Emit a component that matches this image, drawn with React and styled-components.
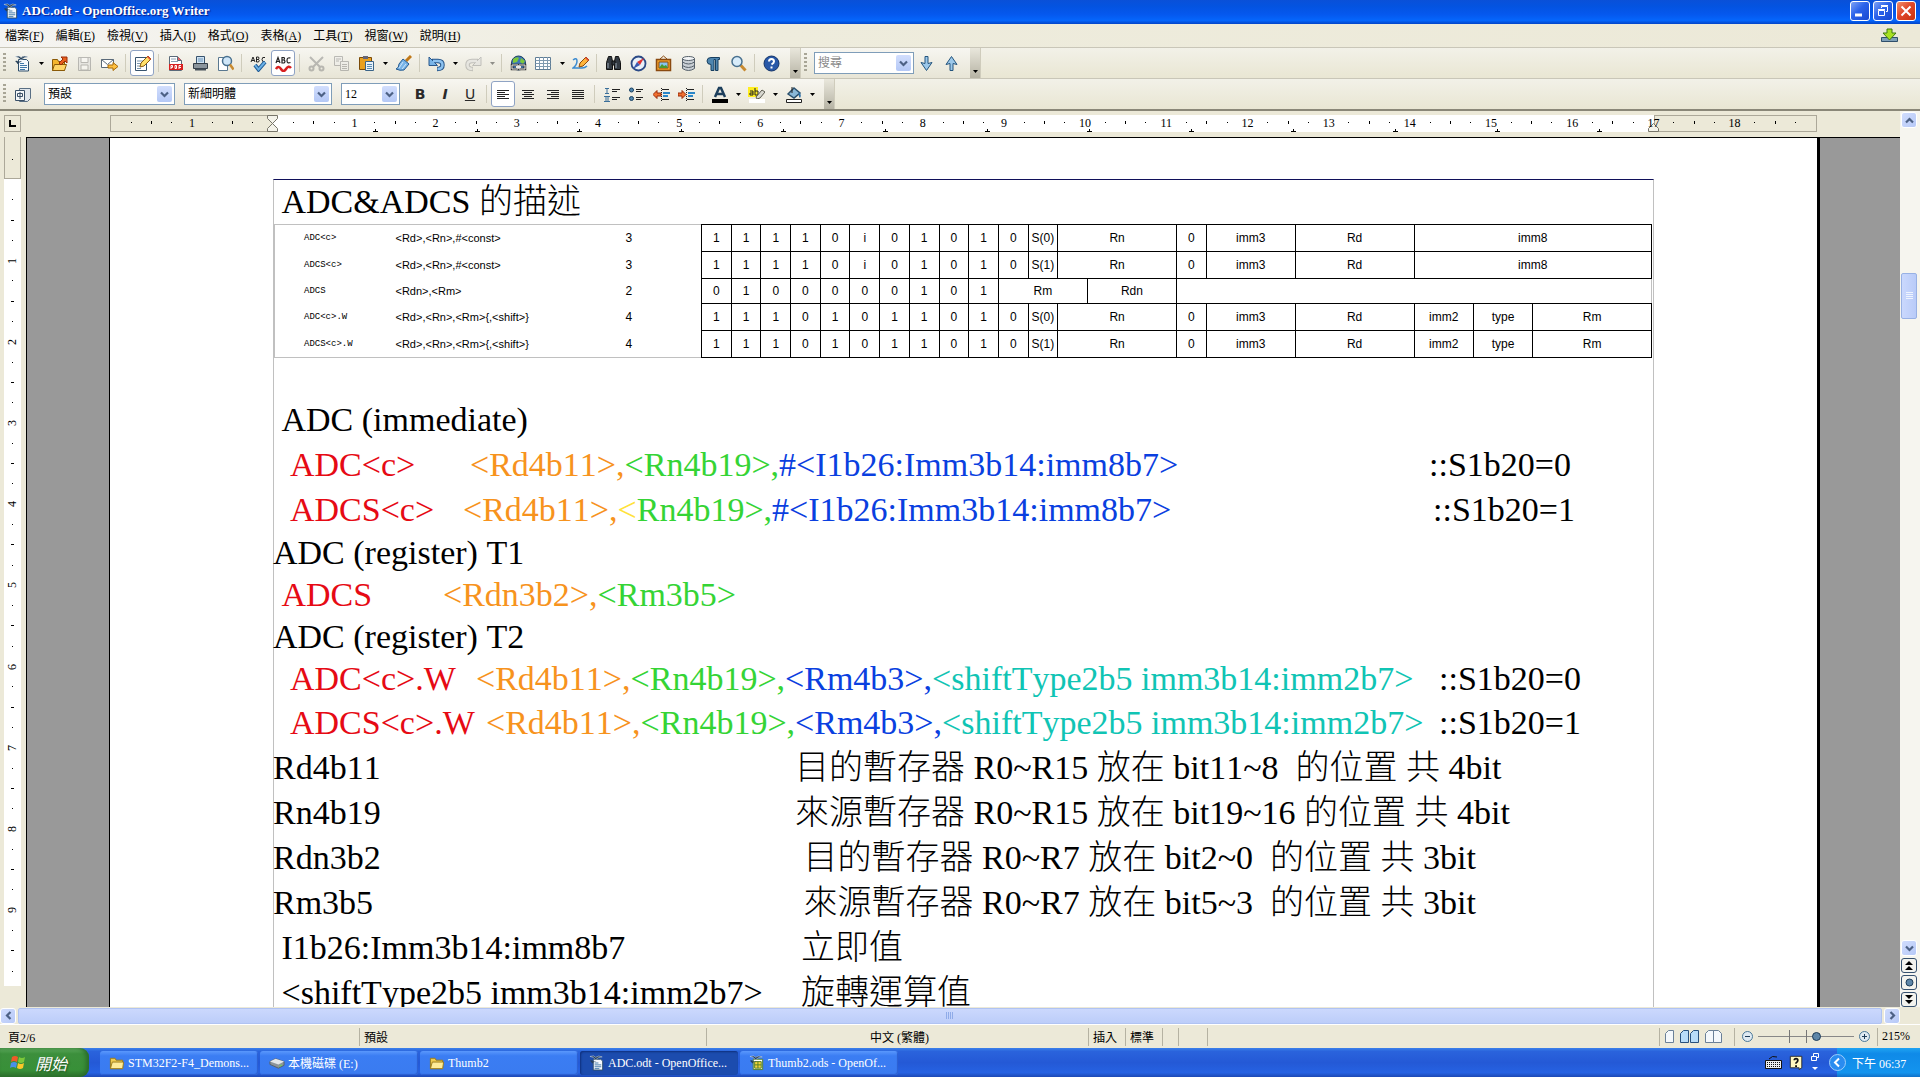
import React from "react";
import styled, { createGlobalStyle, css } from "styled-components";

const UI = `"Liberation Serif", "Noto Sans CJK TC", serif`;

const Global = createGlobalStyle`
  * { box-sizing: border-box; }
  html, body, #root { height: 100%; }
  body { margin: 0; background: #fff; overflow: hidden; font-family: ${UI}; font-size: 12px; color: #000; }
  button, input, select { font: inherit; color: inherit; margin: 0; padding: 0; border: 0; background: none; }
`;

const Window = styled.div`
  display: flex;
  flex-direction: column;
  height: 100vh;
  padding-bottom: 3px;
`;

/* ---------- title bar and menu ---------- */
const TitleBar = styled.header`
  display: flex;
  align-items: center;
  height: 24px;
  padding: 0 4px 2px 3px;
  background: linear-gradient(#0a50d8 0, #0453e0 25%, #0558ee 60%, #0566fc 85%, #0344c8 100%);
  color: #fff;
  flex: none;
`;
const AppTitle = styled.h1`
  flex: 1;
  margin: 0 0 0 3px;
  font-size: 13px;
  line-height: 20px;
  font-weight: bold;
  text-shadow: 1px 1px 1px #0a1883;
`;
const WinButtons = styled.div`
  display: flex;
  gap: 3px;
`;
const WinButton = styled.button`
  display: flex;
  width: 20px;
  height: 20px;
  border: 1px solid #fff;
  border-radius: 3px;
  background: ${(p) => (p.$close ? "linear-gradient(135deg,#f0906c,#e0482a 45%,#c8310f)" : "linear-gradient(135deg,#7da2f5,#2a62ea 45%,#1848d0)")};
`;
const MenuBar = styled.nav`
  display: flex;
  align-items: center;
  gap: 12px;
  height: 23px;
  padding: 0 22px 0 5px;
  background: linear-gradient(90deg, #f5f4f1, #eeecdd 40%, #ece9d8);
  flex: none;
`;
const MenuItem = styled.button`
  line-height: 20px;
  white-space: nowrap;
`;
const Spacer = styled.span`
  flex: 1;
`;
const IconButton = styled.button`
  display: flex;
`;

/* ---------- toolbars ---------- */
const ToolRow = styled.div`
  display: flex;
  align-items: stretch;
  height: 31px;
  background: linear-gradient(#f2f1e8, #e9e6d3);
  border-top: 1px solid #c9c6b8;
  flex: none;
`;
const Tools = styled.div`
  display: flex;
  align-items: center;
  padding-left: 3px;
  background: linear-gradient(#f7f6f1, #e8e5d6);
  border-right: 1px solid #cfccbc;
`;
const Grip = styled.span`
  width: 3px;
  height: 20px;
  margin-right: 4px;
  background: repeating-linear-gradient(#a8a596 0 2px, transparent 2px 4px);
`;
const Tool = styled.button`
  display: flex;
  align-items: center;
  justify-content: center;
  width: 24px;
  height: 26px;
  margin-right: 1px;
  opacity: ${(p) => (p.$off ? 0.45 : 1)};
  ${(p) =>
    p.$on &&
    css`
      background: #fff;
      border: 1px solid #8fa3c4;
      border-radius: 3px;
    `}
`;
const Drop = styled.button`
  width: 12px;
  height: 26px;
  display: flex;
  align-items: center;
  justify-content: center;
  opacity: ${(p) => (p.$off ? 0.4 : 1)};
`;
const Sep = styled.span`
  width: 1px;
  height: 18px;
  margin: 0 4px 0 3px;
  background: #cfccbc;
`;
const Overflow = styled.button`
  align-self: stretch;
  display: flex;
  align-items: flex-end;
  justify-content: center;
  width: 10px;
  padding-bottom: 5px;
  margin-left: 6px;
  background: linear-gradient(#e9e7dc, #b6b3a4);
`;
const Formats = styled.span`
  display: flex;
  align-items: center;
  margin-left: 8px;
`;
const Combo = styled.span`
  display: flex;
  position: relative;
  width: ${(p) => p.$w}px;
  height: 22px;
  margin-left: ${(p) => p.$gap}px;
  border: 1px solid #7f9db9;
  background: #fff;

  select, input {
    width: 100%;
    appearance: none;
    padding-left: 3px;
    outline: 0;
  }
  input::placeholder { color: #8a8a8a; opacity: 1; }
`;
const Chevron = styled.span`
  position: absolute;
  right: 2px;
  top: 2px;
  display: flex;
  align-items: center;
  justify-content: center;
  width: 15px;
  height: 16px;
  border-radius: 2px;
  background: linear-gradient(#d2defd, #b4c8f6);
  pointer-events: none;
`;

/* ---------- workspace ---------- */
const Work = styled.main`
  display: flex;
  flex: 1;
  min-height: 0;
  border-top: 2px solid #8a8778;
  background: #ece9d8;
`;
const WorkLeft = styled.div`
  display: flex;
  flex-direction: column;
  flex: 1;
  min-width: 0;
`;
const RulerRow = styled.div`
  display: flex;
  align-items: flex-start;
  height: 26px;
  padding: 4px 83px 0 4px;
  flex: none;
`;
const TabCorner = styled.button`
  display: flex;
  align-items: center;
  justify-content: center;
  width: 17px;
  height: 17px;
  margin-right: 89px;
  border: 1px solid #aca899;
`;
const Ruler = styled.div`
  position: relative;
  display: flex;
  flex: 1;
  height: 17px;
`;
const RulerMargin = styled.span`
  width: 163px;
  border: 1px solid #aca899;
`;
const RulerBody = styled.span`
  flex: 1;
  background: #fff;
`;
const Slots = styled.div`
  position: absolute;
  inset: 0;
  display: flex;
  padding: 0 11px;
`;
const Slot = styled.span`
  flex: 1 1 0;
  min-width: 0;
  min-height: 0;
  display: flex;
  align-items: center;
  justify-content: center;
  line-height: 14px;
`;
const HSlot = styled(Slot)`
  padding-bottom: 2px;
`;
const Tick = styled.i`
  width: 1px;
  height: ${(p) => (p.$half ? 3 : 1)}px;
  background: #000;
`;
const TabStops = styled.div`
  position: absolute;
  left: 263px;
  right: 215px;
  bottom: 0;
  display: flex;
  justify-content: space-between;
`;
const TabStop = styled.i`
  width: 5px;
  height: 3px;
  border-bottom: 1px solid #000;
  background: linear-gradient(#000, #000) center / 1px 100% no-repeat;
`;
const Indent = styled.svg`
  position: absolute;
  top: 0;
  ${(p) => p.$side}: 157px;
`;
const Body = styled.div`
  display: flex;
  flex: 1;
  min-height: 0;
`;
const VRuler = styled.div`
  position: relative;
  display: flex;
  flex-direction: column;
  width: 17px;
  margin: 0 5px 21px 4px;
`;
const VMargin = styled.span`
  height: 42px;
  border: 1px solid #aca899;
  border-top: 0;
`;
const VSlots = styled(Slots)`
  flex-direction: column;
  padding: 12px 0 5px;
`;
const VNum = styled.span`
  writing-mode: vertical-rl;
  transform: rotate(180deg);
  line-height: 17px;
`;
const VTick = styled.i`
  height: 1px;
  width: ${(p) => (p.$half ? 3 : 1)}px;
  background: #000;
`;
const Desk = styled.div`
  flex: 1;
  display: flex;
  min-width: 0;
  padding: 0 80px 0 82px;
  border-top: 1px solid #000;
  border-left: 1px solid #000;
  background: #999;
  overflow: hidden;
`;
const Page = styled.article`
  flex: 1;
  min-width: 0;
  padding: 41px 163px 0 163px;
  border-left: 1px solid #000;
  border-right: 3px solid #000;
  background: #fff;
`;
const Frame = styled.section`
  min-height: 900px;
  border: 1px solid #c0c0c0;
  border-top-color: #10105a;
  border-bottom: 0;
`;
const Line = styled.p`
  display: flex;
  margin: 0 0 0 -1px;
  height: ${(p) => p.$h}px;
  line-height: ${(p) => p.$h}px;
  font-size: 34px;
  font-weight: 300;
  font-kerning: none;
  white-space: pre;
`;
const Part = styled.span`
  flex: none;
  width: ${(p) => (p.$w ? p.$w + "px" : "auto")};
  color: ${(p) => p.$c || "inherit"};
`;
const Ink = styled.span`
  color: ${(p) => p.$c};
`;

const Codes = styled.table`
  width: calc(100% - 1px);
  margin-bottom: 40px;
  table-layout: fixed;
  border-collapse: collapse;
  border: 1px solid #c0c0c0;
  font-family: "Liberation Sans Narrow", "Liberation Sans", Arial, sans-serif;
  font-size: 12px;
  line-height: 24px;

  td { padding: 0; white-space: nowrap; }
`;
const Column = styled.col`
  width: ${(p) => p.$w}px;
`;
const CodeRow = styled.tr`
  height: ${(p) => p.$h}px;
`;
const Mnemonic = styled.td`
  font-family: "Liberation Mono", monospace;
  font-size: 9px;
  text-indent: 29px;
`;
const Operands = styled.td`
  font-size: 11px;
`;
const Bits = styled.td`
  border: 1px solid #000;
  text-align: center;
`;
const Count = styled.td`
  text-align: left;
`;

/* ---------- scroll bars ---------- */
const VScroll = styled.div`
  display: flex;
  flex-direction: column;
  width: 20px;
  padding: 1px 3px 0 1px;
  background: #f6f5ef;
`;
const ScrollButton = styled.button`
  display: flex;
  align-items: center;
  justify-content: center;
  flex: none;
  width: 16px;
  height: 16px;
  border: 1px solid #fff;
  border-radius: 3px;
  background: linear-gradient(135deg, #d0dcfd, #b7c9f7);
`;
const NavButton = styled(ScrollButton)`
  height: 15px;
  margin-top: 2px;
  border: 1px solid #35506e;
  background: #f3f3ee;
`;
const Gap = styled.span`
  flex: ${(p) => p.$n} 1 0;
`;
const VThumb = styled.span`
  display: flex;
  align-items: center;
  justify-content: center;
  height: 46px;
  border: 1px solid #98b1e4;
  border-radius: 2px;
  background: linear-gradient(90deg, #cad8fd, #b9cbf8);
`;
const HScroll = styled.div`
  display: flex;
  align-items: center;
  height: 17px;
  gap: 2px;
  padding-right: 20px;
  background: #ece9d8;
  flex: none;
`;
const HThumb = styled.span`
  flex: 1;
  display: flex;
  align-items: center;
  justify-content: center;
  height: 16px;
  border: 1px solid #b0c3f2;
  border-radius: 2px;
  background: linear-gradient(#cbd8fd, #bccdf9);
`;

/* ---------- status bar ---------- */
const Status = styled.footer`
  display: flex;
  align-items: center;
  height: 24px;
  background: #ece9d8;
  border-top: 1px solid #fff;
  padding-right: 3px;
  flex: none;
`;
const Cell = styled.span`
  display: flex;
  align-items: center;
  justify-content: ${(p) => (p.$center ? "center" : "flex-start")};
  gap: 2px;
  height: 18px;
  padding-left: ${(p) => (p.$first ? 8 : 4)}px;
  border-left: ${(p) => (p.$first ? "0" : "1px solid #b5b2a2")};
  ${(p) => (p.$w ? `width: ${p.$w}px;` : "flex: 1;")}
  white-space: nowrap;
`;
const Zoom = styled.input`
  appearance: none;
  width: 96px;
  height: 13px;
  background:
    linear-gradient(#777, #777) 31px 0 / 1px 13px no-repeat,
    linear-gradient(#777, #777) 48px 0 / 1px 13px no-repeat,
    linear-gradient(#888, #888) 0 6px / 100% 1px no-repeat;
  &::-webkit-slider-thumb {
    appearance: none;
    width: 9px;
    height: 9px;
    border: 1px solid #1d3c58;
    border-radius: 50%;
    background: #5d86a8;
  }
`;

/* ---------- task bar ---------- */
const TaskBar = styled.div`
  display: flex;
  align-items: stretch;
  height: 29px;
  background: linear-gradient(#3b80ea 0, #2a63dc 12%, #2459d6 50%, #2662e2 85%, #1d48b4);
  color: #fff;
  flex: none;
`;
const Start = styled.button`
  display: flex;
  align-items: center;
  gap: 8px;
  width: 89px;
  padding-left: 10px;
  margin-right: 11px;
  border-radius: 0 9px 9px 0;
  background: linear-gradient(#62b062, #3c8f3c 20%, #389038 75%, #2c702c);
  box-shadow: inset -3px 0 4px #2a6b2a;
  font-size: 16px;
  font-style: italic;
  color: #fff;
  text-shadow: 1px 1px 2px #1c4a1c;
`;
const Task = styled.button`
  display: flex;
  align-items: center;
  gap: 3px;
  width: 158px;
  margin: 3px 2px 2px 0;
  padding-left: 9px;
  border-radius: 3px;
  background: ${(p) => (p.$on ? "#1c4cae" : "linear-gradient(#5a98fc, #3b7df3 20%, #3a7bf0)")};
  box-shadow: ${(p) => (p.$on ? "inset 1px 1px 2px #0e2f7c" : "inset -1px -1px 1px #2c5fd0")};
  color: #fff;
  white-space: nowrap;
`;
const Tray = styled.div`
  display: flex;
  align-items: center;
  gap: 7px;
  padding-right: 16px;
`;
const Clock = styled.div`
  display: flex;
  align-items: center;
  gap: 6px;
  width: 83px;
  background: linear-gradient(#1fa3f2, #0f8ae8 20%, #1394ee 85%, #0f70c8);
`;
const Round = styled.button`
  display: flex;
  margin-left: -8px;
`;

/* ---------- drawings ---------- */
const lines = (rows, y0 = 2) =>
  rows.map(([a, b], i) => <path key={i} d={`M${a} ${y0 + i * 2}.5H${b}`} stroke="#222" />);
const sheet = (
  <g>
    <path d="M4.500 4.500h8l2 2v9.500h-10z" fill="#f4f8fc" stroke="#2f4f6b" />
    <path d="M6 8.500h4M6 10.500h7M6 12.500h7M6 14.500h5" stroke="#3f78a8" />
  </g>
);
const gull = (
  <g>
    <path d="M1 1.500q5-1.500 6 1q3-2.500 7-.500q-4 0-7 3q-2-3-6-3.500z" fill="#284058" stroke="#dfe8f0" strokeWidth=".5" />
    <path d="M1 6q3-1 3 1q2-1 4-.500q-3 .500-4.500 2.500q-1-2-2.500-3z" fill="#284058" />
  </g>
);

const ICONS = {
  writer: <g>{sheet}{gull}</g>,
  calc: (
    <g>
      <path d="M4.500 4.500h10v11h-10z" fill="#fff" stroke="#4f7d22" />
      <path d="M6 7h7v7H6z" fill="#f4d23a" stroke="#4f7d22" />
      <path d="M9.500 7v7M6 10.500h7" stroke="#4f7d22" />
      {gull}
    </g>
  ),
  open: (
    <g stroke="#8a5a08">
      <path d="M1.500 15.500v-11h5l1 2h6v9z" fill="#f5b52c" />
      <path d="M1.500 15.500l2-6h12l-2 6z" fill="#ffd566" />
      <path d="M8 8l4-4-2-2h6v6l-2-2-4 4z" fill="#e8601c" stroke="#9a2a08" />
    </g>
  ),
  save: (
    <g stroke="#777" fill="#ddd">
      <path d="M2.500 2.500h12v13h-12z" />
      <path d="M5 2.500h7v5H5zM5 10h7v5H5z" fill="#fff" />
    </g>
  ),
  mail: (
    <g>
      <path d="M.500 4.500h12v8H.500z" fill="#fff" stroke="#5a6a7a" />
      <path d="M.500 4.500l6 5 6-5" fill="none" stroke="#5a6a7a" />
      <path d="M7 10h5V7.500l5 4-5 4V13H7z" fill="#ffc040" stroke="#a86a08" />
    </g>
  ),
  edit: (
    <g>
      <path d="M1.500 2.500h11v13h-11z" fill="#fff" stroke="#37536e" />
      <path d="M3 6h7M3 8.500h5M3 11h4M3 13.500h4" stroke="#7a96ae" />
      <path d="M6 12l1-4 7-7 3 3-7 7z" fill="#ffe06a" stroke="#8a5a10" />
      <path d="M13 2l1-1 3 3-1 1z" fill="#e84838" />
    </g>
  ),
  pdf: (
    <g>
      <path d="M2.500 1.500h8l4 4v10h-12z" fill="#fff" stroke="#5a6a7a" />
      <path d="M10.500 1.500v4h4" fill="#e86060" stroke="#5a6a7a" />
      <path d="M4 4h5M4 6.500h7" stroke="#8aa0b4" />
      <path d="M2 9h14v6H2z" fill="#d82020" />
      <path d="M4 14v-3.500h1.500v2H4M8 10.500v3h1.500v-3zM12 14v-3.500h2M12 12.500h2" stroke="#fff" fill="none" />
    </g>
  ),
  print: (
    <g>
      <path d="M4.500 1.500h8v7h-8z" fill="#cfe2f2" stroke="#37536e" />
      <path d="M1.500 8.500h14v5h-14z" fill="#8a949c" stroke="#333d46" />
      <path d="M3 13.500h11v2H3z" fill="#454f58" />
      <path d="M6 4h5M6 6h5" stroke="#6a94b8" />
    </g>
  ),
  preview: (
    <g>
      <path d="M1.500 2.500h9v13h-9z" fill="#fff" stroke="#5a7890" />
      <circle cx="10" cy="6" r="4.500" fill="#cfe6f8" stroke="#48708f" strokeWidth="1.500" />
      <path d="M13 9.500l3.500 5" stroke="#c88a30" strokeWidth="2.500" />
    </g>
  ),
  abc: (
    <g>
      <path d="M1 7l2-5 2 5M2 5.500h2M6.500 2v5h2q1.500-1.500 0-2.500h-2 2q1-1.500 0-2.500zM15 2.500q-3-1-3 2t3 2" fill="none" stroke="#222" />
      <path d="M5 10l3.500 4.500L15 7" fill="none" stroke="#1f5a94" strokeWidth="4" />
      <path d="M5 10l3.500 4.500L15 7" fill="none" stroke="#6ab0e6" strokeWidth="2" />
    </g>
  ),
  wave: (
    <g fill="none">
      <path d="M1 8l2-5.500 2 5.500M2 6.500h2M7 2.500v5.500h2q2-1.500 0-3H7h2q1-1.500 0-2.500zM15.500 3Q12 2 12 5.500t3.500 2" stroke="#222" strokeWidth="1.200" />
      <path d="M1 14q2.500-4 5 0t5 0 5-1" stroke="#d82020" strokeWidth="2.500" />
    </g>
  ),
  cut: (
    <g stroke="#777" fill="none" strokeWidth="2">
      <path d="M2 2l10 10M15 2L5 12" />
      <circle cx="3.500" cy="13.500" r="2" /><circle cx="13.500" cy="13.500" r="2" />
    </g>
  ),
  copy: (
    <g stroke="#777" fill="#eee">
      <path d="M1.500 1.500h8v9h-8z" /><path d="M7.500 6.500h8v9h-8z" />
      <path d="M3 4h5M3 6h3M9 9.500h5M9 11.500h5M9 13.500h5" />
    </g>
  ),
  paste: (
    <g>
      <path d="M1.500 2.500h12v12h-12z" fill="#e8a020" stroke="#7a4a08" />
      <path d="M5 1h5v3H5z" fill="#667" />
      <path d="M7.500 6.500h8v9h-8z" fill="#e8f2fa" stroke="#3a6488" />
      <path d="M9 9.500h5M9 11.500h5M9 13.500h5" stroke="#5a8cb4" />
    </g>
  ),
  brush: (
    <g>
      <path d="M16 1l-5 5" stroke="#c07818" strokeWidth="3" />
      <path d="M8 4l6 5-5 6q-4 1-8-1 3-1 3-5z" fill="#78b4e8" stroke="#245a90" />
      <path d="M4 13l4-6M7 14l4-5" stroke="#cfe6fa" />
    </g>
  ),
  undo: (
    <g fill="none">
      <path d="M4 6h6q4.500 0 4.500 4T9 14" stroke="#28568a" strokeWidth="4.500" />
      <path d="M1 2v8.500h8.500z" fill="#78b4e8" stroke="#28568a" />
      <path d="M5 6h5q4.500 0 4.500 4T9.500 14" stroke="#8cc2f0" strokeWidth="2.500" />
    </g>
  ),
  redo: (
    <g fill="none">
      <path d="M13 6H7q-4.500 0-4.500 4T8 14" stroke="#888" strokeWidth="4.500" />
      <path d="M16 2v8.500H7.500z" fill="#ddd" stroke="#888" />
      <path d="M12 6H7q-4.500 0-4.500 4T7.500 14" stroke="#ddd" strokeWidth="2.500" />
    </g>
  ),
  globe: (
    <g>
      <circle cx="8.500" cy="8" r="7" fill="#3f78b8" stroke="#1c3f5f" />
      <path d="M3 4q4-3 6-1l-2 4-4 1zM11 3l4 3-2 3-3-2z" fill="#7cc83a" />
      <path d="M2 10h6v4H2zM9 10h6v4H9z" fill="none" stroke="#333" strokeWidth="2.500" />
      <path d="M2 10h6v4H2zM9 10h6v4H9z" fill="none" stroke="#e8e8e8" />
      <path d="M6 12h5" stroke="#e8e8e8" strokeWidth="2" />
    </g>
  ),
  table: (
    <g>
      <path d="M.500 2.500h15v12h-15z" fill="#fff" stroke="#5f7d96" />
      <path d="M.500 5.500h15M.500 8.500h15M.500 11.500h15M4.500 2v12M8.500 2v12M12.500 2v12" stroke="#7f9ab0" />
    </g>
  ),
  draw: (
    <g>
      <path d="M1 5q4-3 4 1t-4 7h9q3 0 5-2" fill="none" stroke="#3a8ad0" strokeWidth="1.500" />
      <path d="M7 12l1-4 6-6 3 3-6 6z" fill="#ffb43a" stroke="#8a4a10" />
      <path d="M13 3l1-1 3 3-1 1z" fill="#e84838" />
    </g>
  ),
  find: (
    <g fill="#333a42" stroke="#111">
      <path d="M3.500 1.500h3l1 5v8h-6v-7zM10.500 1.500h3l2 6v7h-6v-8z" />
      <path d="M7 6h3v4H7z" />
      <path d="M3 8v5M11 8v5" stroke="#9aa6b2" />
    </g>
  ),
  compass: (
    <g>
      <circle cx="8.500" cy="8.500" r="7" fill="#e8f0f8" stroke="#2b4a86" strokeWidth="1.800" />
      <path d="M14 3L7 7l3 3z" fill="#e03030" /><path d="M3 14l4-7 3 3z" fill="#3a5ab0" />
    </g>
  ),
  gallery: (
    <g>
      <path d="M5 4l3.500-3L12 4" fill="none" stroke="#8a4a10" />
      <path d="M1.500 4.500h14v11h-14z" fill="#f0a028" stroke="#8a4a10" strokeWidth="1.500" />
      <path d="M4 7h9v6H4z" fill="#88c4f0" stroke="#8a4a10" /><path d="M4 13l3-4 2 2 2-1 2 3z" fill="#4a9a30" />
    </g>
  ),
  data: (
    <g fill="#c8ced4" stroke="#55606a">
      <path d="M2.500 3.500v10q6 4 12 0v-10z" />
      <ellipse cx="8.500" cy="3.500" rx="6" ry="2" fill="#f2f4f6" />
      <path d="M2.500 7q6 4 12 0M2.500 10.500q6 4 12 0" fill="none" />
    </g>
  ),
  para: <path d="M14.500 2.500H6q-4 0-4 3.500t4 3.500v6h3v-11h1.500v11h2.500v-11h1.500z" fill="#4f86b0" stroke="#173f60" />,
  zoom: (
    <g>
      <path d="M10.500 10l5 5.500" stroke="#c88a30" strokeWidth="3" />
      <circle cx="7" cy="6.500" r="5" fill="#d8ecfa" stroke="#48708f" strokeWidth="1.500" />
    </g>
  ),
  help: (
    <g>
      <circle cx="8.500" cy="8.500" r="7.500" fill="#2858a8" stroke="#143468" />
      <path d="M6 6.500q0-2.500 2.500-2.500T11 6.500q0 1.500-2.500 3" fill="none" stroke="#fff" strokeWidth="2" />
      <path d="M7.500 11.500h2v2h-2z" fill="#fff" />
    </g>
  ),
  down: <path d="M7 1.500h3v7l4-1-5.500 8-5.500-8 4 1z" fill="#9cc8ea" stroke="#24557e" strokeLinejoin="round" />,
  up: <path d="M7 15.500h3v-7l4 1-5.500-8-5.500 8 4-1z" fill="#9cc8ea" stroke="#24557e" strokeLinejoin="round" />,
  styles: (
    <g>
      <path d="M5.500 2.500h11v10l-3 3h-8z" fill="#e0e6ec" stroke="#5a6f84" />
      <path d="M1.500 4.500h9v10h-9z" fill="#f4f6f8" stroke="#3a5068" />
      <path d="M3.500 7.500h5v3h-5zM6 6v7" fill="none" stroke="#3a5068" />
    </g>
  ),
  left: lines([[2, 14], [2, 10], [2, 14], [2, 10], [2, 14]], 4),
  center: lines([[2, 14], [4, 12], [2, 14], [4, 12], [2, 14]], 4),
  right: lines([[2, 14], [6, 14], [2, 14], [6, 14], [2, 14]], 4),
  just: lines([[2, 14], [2, 14], [2, 14], [2, 14], [2, 14]], 4),
  num: (
    <g>
      <path d="M2 2.500h4M4 3v4M2 7.500h4M1 10.500h6M3 11v4M5 11v4M1 15.500h6" stroke="#3a6f9a" />
      <path d="M9 3.500h8M9 5.500h5M9 11.500h8M9 13.500h5" stroke="#222" />
    </g>
  ),
  bullet: (
    <g>
      <circle cx="3.500" cy="4" r="2" fill="#4f86b0" stroke="#173f60" />
      <circle cx="3.500" cy="12.500" r="2" fill="#4f86b0" stroke="#173f60" />
      <path d="M8 3.500h7M8 5.500h5M8 11.500h7M8 13.500h5" stroke="#222" />
    </g>
  ),
  outdent: (
    <g>
      <path d="M8.500 2v14" stroke="#222" strokeDasharray="1 1" />
      <path d="M9 3.500h7M9 13.500h7" stroke="#222" /><path d="M10 7h7M10 10h5" stroke="#2a86c8" strokeWidth="2" />
      <path d="M0 8.500l4-4V7h4v3H4v2.500z" fill="#f07030" stroke="#9a2a08" />
    </g>
  ),
  indent: (
    <g>
      <path d="M8.500 2v14" stroke="#222" strokeDasharray="1 1" />
      <path d="M9 3.500h7M9 13.500h7" stroke="#222" /><path d="M10 7h7M10 10h5" stroke="#2a86c8" strokeWidth="2" />
      <path d="M8 8.500l-4-4V7H0v3h4v2.500z" fill="#f07030" stroke="#9a2a08" />
    </g>
  ),
  color: (
    <g>
      <path d="M4 11l4-9h2l4 9M6 8h6" fill="none" stroke="#1d3f5c" strokeWidth="2.500" />
      <path d="M1 13h16v4H1z" fill="#000" />
    </g>
  ),
  mark: (
    <g>
      <path d="M0 1h10v10H0z" fill="#ffee20" />
      <path d="M2 5h3v4H2V7h3M7 2v7h3V5H7" fill="none" stroke="#222" />
      <path d="M8 11l6-7 3 2-5 6-3 1z" fill="#d8d8d0" stroke="#5a5a50" />
      <path d="M1 13h16v4H1z" fill="#fff" />
    </g>
  ),
  fill: (
    <g>
      <path d="M3 8l6-6 6 5-6 5z" fill="#8ab8d8" stroke="#2a4f6c" strokeWidth="1.500" />
      <path d="M7 1v6" stroke="#222" /><path d="M14 6q3 3 1 6-2-2-1-6z" fill="#2a6fa8" />
      <path d="M1.500 13.500h15v3h-15z" fill="#fff" stroke="#222" />
    </g>
  ),
  update: (
    <g>
      <path d="M.500 10.500h16v4h-16z" fill="#7fa0b8" stroke="#2f4f6b" />
      <path d="M6 2h5v4h4l-6.500 7L2 6h4z" fill="#a8e020" stroke="#3f7a10" />
    </g>
  ),
  folder: (
    <g stroke="#9a7a18">
      <path d="M1.500 14.500v-11h5l1 2h7v9z" fill="#f0cc50" /><path d="M1.500 14.500l2-7h12l-1 7z" fill="#ffec98" />
    </g>
  ),
  disk: (
    <g>
      <path d="M1 7l6-3 9 3v4l-6 3-9-4z" fill="#8d949a" stroke="#55606a" />
      <path d="M1 7l6-3 9 3-6 3z" fill="#e4e7ea" />
      <path d="M11 12l3-1.500" stroke="#6ce04a" />
    </g>
  ),
  flag: (
    <g>
      <path d="M2 3q3-2 6 0l-1 5q-3-2-6 0z" fill="#f05a28" /><path d="M9 3q3 2 6 0l-1 5q-3 2-6 0z" fill="#7cc83a" />
      <path d="M1 9q3-2 6 0l-1 5q-3-2-6 0z" fill="#4a90e8" /><path d="M8 9q3 2 6 0l-1 5q-3 2-6 0z" fill="#fbc828" />
    </g>
  ),
  keyboard: (
    <g>
      <path d="M4 5q3-4 8-2" fill="none" stroke="#111" /><path d="M.500 6.500h16v8H.500z" fill="#eee" stroke="#111" />
      <path d="M2 8.500h13M2 10.500h13M2 12.500h13" stroke="#111" strokeDasharray="1 1" />
    </g>
  ),
  ask: (
    <g>
      <path d="M1.500 1.500h13v13l-3 2v-2h-10z" fill="#fff8c0" stroke="#222" />
      <path d="M6 6q0-2 2-2t2 2-2 3v1" fill="none" stroke="#111" strokeWidth="2" /><path d="M7 11.500h2v2H7z" />
    </g>
  ),
  chev: (
    <g>
      <circle cx="8.500" cy="8.500" r="8" fill="#2a8cf0" stroke="#9ccffa" />
      <path d="M10 4.500l-4 4 4 4" fill="none" stroke="#fff" strokeWidth="2" />
    </g>
  ),
  minus: <g><circle cx="8.500" cy="8.500" r="5" fill="#dfeaf2" stroke="#4a7898" /><path d="M6 8.500h5" stroke="#1d3c58" /></g>,
  plus: <g><circle cx="8.500" cy="8.500" r="5" fill="#dfeaf2" stroke="#4a7898" /><path d="M6 8.500h5M8.500 6v5" stroke="#1d3c58" /></g>,
};
const Icon = ({ n, s = 17 }) => (
  <svg width={s} height={s} viewBox="0 0 17 17" fill="#000" aria-hidden="true">{ICONS[n]}</svg>
);
const Caret = () => <svg width="5" height="3" viewBox="0 0 5 3" aria-hidden="true"><path d="M0 0h5L2.500 3z" /></svg>;
const TURN = { down: 0, left: 90, up: 180, right: 270 };
const Arrow = ({ dir = "down" }) => (
  <svg width="9" height="9" viewBox="0 0 9 9" aria-hidden="true">
    <path d="M1 2.500l3.500 3.500L8 2.500" fill="none" stroke="#4d6185" strokeWidth="2.200" transform={`rotate(${TURN[dir]} 4.500 4.500)`} />
  </svg>
);
const Letter = styled.span`
  font-family: "DejaVu Sans", sans-serif;
  font-size: 14px;
  line-height: 18px;
  color: #2a2a2a;
  font-weight: ${(p) => (p.$k === "U" ? "normal" : "bold")};
  font-style: ${(p) => (p.$k === "I" ? "italic" : "normal")};
  text-decoration: ${(p) => (p.$k === "U" ? "underline" : "none")};
`;

/* ---------- content ---------- */
const MENUS = [["檔案", "F"], ["編輯", "E"], ["檢視", "V"], ["插入", "I"], ["格式", "O"], ["表格", "A"], ["工具", "T"], ["視窗", "W"], ["說明", "H"]];

const BAR1 = "writer > open save- mail | edit+ | pdf print preview | abc wave+ | cut- copy- paste > brush | undo > redo- >- | globe table > draw | find compass gallery data para zoom | help".split(" ");
const BAR2 = "B I U | left+ center right just | num bullet outdent indent | color > mark > fill >".split(" ");

const ToolItems = ({ items }) =>
  items.map((t, i) => {
    const off = t.endsWith("-");
    const on = t.endsWith("+");
    const name = t.replace(/[-+]$/, "");
    if (name === "|") return <Sep key={i} />;
    if (name === ">") return <Drop key={i} $off={off} aria-label="more"><Caret /></Drop>;
    return (
      <Tool key={i} $off={off} $on={on} aria-label={name}>
        {ICONS[name] ? <Icon n={name} /> : <Letter $k={name}>{name}</Letter>}
      </Tool>
    );
  });

const Select = ({ value, w, label }) => (
  <Combo $w={w} $gap={9}>
    <select aria-label={label} defaultValue={value}><option>{value}</option></select>
    <Chevron><Arrow /></Chevron>
  </Combo>
);

const range = (a, b) => Array.from({ length: b - a + 1 }, (_, i) => a + i);

const R = "#e60a14", O = "#f7931d", G = "#35d435", B = "#0a3fe0", T = "#10c4b4";
const LINES = [
  [44, [[" ADC (immediate)"]]],
  [45, [["  ADC<c>", 197, R], [[["<Rd4b11>,", O], ["<Rn4b19>,", G], ["#<I1b26:Imm3b14:imm8b7>", B]], 959], ["::S1b20=0"]]],
  [45, [["  ADCS<c>", 190, R], [[["<Rd4b11>,", O], ["<", "#ffe23a"], ["Rn4b19>,", G], ["#<I1b26:Imm3b14:imm8b7>", B]], 970], ["::S1b20=1"]]],
  [42, [["ADC (register) T1"]]],
  [42, [[" ADCS", 170, R], [[["<Rdn3b2>,", O], ["<Rm3b5>", G]]]]],
  [42, [["ADC (register) T2"]]],
  [42, [["  ADC<c>.W", 203, R], [[["<Rd4b11>,", O], ["<Rn4b19>,", G], ["<Rm4b3>,", B], ["<shiftType2b5 imm3b14:imm2b7>", T]], 963], ["::S1b20=0"]]],
  [45, [["  ADCS<c>.W", 213, R], [[["<Rd4b11>,", O], ["<Rn4b19>,", G], ["<Rm4b3>,", B], ["<shiftType2b5 imm3b14:imm2b7>", T]], 953], ["::S1b20=1"]]],
  [45, [["Rd4b11", 522], ["目的暫存器 R0~R15 放在 bit11~8  的位置 共 4bit"]]],
  [45, [["Rn4b19", 522], ["來源暫存器 R0~R15 放在 bit19~16 的位置 共 4bit"]]],
  [45, [["Rdn3b2", 522], [" 目的暫存器 R0~R7 放在 bit2~0  的位置 共 3bit"]]],
  [45, [["Rm3b5", 522], [" 來源暫存器 R0~R7 放在 bit5~3  的位置 共 3bit"]]],
  [45, [[" I1b26:Imm3b14:imm8b7", 528], ["立即值"]]],
  [45, [[" <shiftType2b5 imm3b14:imm2b7>", 528], ["旋轉運算值"]]],
];

const bits = (s) => s.split("").map((c) => [c, 1]);
const imm = (s) => [...bits("11110i01010"), [s, 1], ["Rn", 4], ["0", 1], ["imm3", 3], ["Rd", 4], ["imm8", 8]];
const reg = (s) => [...bits("11101011010"), [s, 1], ["Rn", 4], ["0", 1], ["imm3", 3], ["Rd", 4], ["imm2", 2], ["type", 2], ["Rm", 4]];
const CODES = [
  ["ADC<c>", "<Rd>,<Rn>,#<const>", 3, imm("S(0)"), 27],
  ["ADCS<c>", "<Rd>,<Rn>,#<const>", 3, imm("S(1)"), 27],
  ["ADCS", "<Rdn>,<Rm>", 2, [...bits("0100000101"), ["Rm", 3], ["Rdn", 3]], 25],
  ["ADC<c>.W", "<Rd>,<Rn>,<Rm>{,<shift>}", 4, reg("S(0)"), 27],
  ["ADCS<c>.W", "<Rd>,<Rn>,<Rm>{,<shift>}", 4, reg("S(1)"), 27],
];
const TASKS = [["folder", "STM32F2-F4_Demons..."], ["disk", "本機磁碟 (E:)"], ["folder", "Thumb2"], ["writer", "ADC.odt - OpenOffice...", true], ["calc", "Thumb2.ods - OpenOf..."]];

export default function App() {
  return (
    <Window>
      <Global />
      <TitleBar>
        <Icon n="writer" s={16} />
        <AppTitle>ADC.odt - OpenOffice.org Writer</AppTitle>
        <WinButtons>
          <WinButton aria-label="Minimize"><svg width="18" height="18"><path d="M4 13h7" stroke="#fff" strokeWidth="3" /></svg></WinButton>
          <WinButton aria-label="Restore"><svg width="18" height="18" fill="none" stroke="#fff"><path d="M4.500 8.500h6v5h-6zM4 7.500h7M7.500 6V4.500h6v5H12M7 3.500h7" /></svg></WinButton>
          <WinButton $close aria-label="Close"><svg width="18" height="18"><path d="M4.500 4.500l9 9M13.500 4.500l-9 9" stroke="#fff" strokeWidth="2" /></svg></WinButton>
        </WinButtons>
      </TitleBar>
      <MenuBar>
        {MENUS.map(([t, k]) => <MenuItem key={k}>{t}(<u>{k}</u>)</MenuItem>)}
        <Spacer />
        <IconButton aria-label="Update"><Icon n="update" /></IconButton>
      </MenuBar>
      <ToolRow>
        <Tools>
          <Grip />
          <ToolItems items={BAR1} />
          <Overflow aria-label="more"><Caret /></Overflow>
        </Tools>
        <Tools>
          <Grip />
          <Combo $w={100} $gap={3}>
            <input aria-label="搜尋" placeholder="搜尋" />
            <Chevron><Arrow /></Chevron>
          </Combo>
          <ToolItems items={["down", "up"]} />
          <Overflow aria-label="more"><Caret /></Overflow>
        </Tools>
      </ToolRow>
      <ToolRow>
        <Tools>
          <Grip />
          <ToolItems items={["styles"]} />
          <Select value="預設" w={131} label="style" />
          <Select value="新細明體" w={148} label="font" />
          <Select value="12" w={59} label="size" />
          <Formats>
            <ToolItems items={BAR2} />
          </Formats>
          <Overflow aria-label="more"><Caret /></Overflow>
        </Tools>
      </ToolRow>

      <Work>
        <WorkLeft>
          <RulerRow>
            <TabCorner aria-label="tab"><svg width="7" height="7"><path d="M1 0v6h6" fill="none" stroke="#000" strokeWidth="2" /></svg></TabCorner>
            <Ruler>
              <RulerMargin /><RulerBody /><RulerMargin />
              <Indent $side="left" width="12" height="17"><path d="M.500.500h10v3l-5 5-5-5zM5.500 8.500l5 5v3H.500v-3z" fill="#f4f3ea" stroke="#77756a" /></Indent>
              <Indent $side="right" width="12" height="17"><path d="M5.500 8.500l5 5v3H.500v-3z" fill="#f4f3ea" stroke="#77756a" /></Indent>
              <Slots>
                {range(-7, 75).map((k) => (
                  <HSlot key={k}>{k % 4 === 0 ? (k ? Math.abs(k / 4) : "") : <Tick $half={k % 2 === 0} />}</HSlot>
                ))}
              </Slots>
              <TabStops>{range(1, 13).map((k) => <TabStop key={k} />)}</TabStops>
            </Ruler>
          </RulerRow>
          <Body>
            <VRuler>
              <VMargin /><RulerBody />
              <VSlots>
                {range(-1, 39).map((k) => (
                  <Slot key={k}>{k % 4 === 0 ? (k ? <VNum>{k / 4}</VNum> : "") : <VTick $half={k % 2 === 0} />}</Slot>
                ))}
              </VSlots>
            </VRuler>
            <Desk>
              <Page>
                <Frame>
                  <Line $h={44}><Part> ADC&amp;ADCS 的描述</Part></Line>
                  <Codes>
                    <colgroup>
                      <Column $w={121} /><Column $w={230} /><Column $w={76} />
                      {range(1, 32).map((k) => <col key={k} />)}
                    </colgroup>
                    <tbody>
                      {CODES.map(([m, ops, n, cells, h], i) => (
                        <CodeRow key={i} $h={h}>
                          <Mnemonic>{m}</Mnemonic>
                          <Operands>{ops}</Operands>
                          <Count>{n}</Count>
                          {cells.map(([t, span], j) => <Bits key={j} colSpan={span}>{t}</Bits>)}
                        </CodeRow>
                      ))}
                    </tbody>
                  </Codes>
                  {LINES.map(([h, parts], i) => (
                    <Line key={i} $h={h}>
                      {parts.map(([text, w, c], j) => (
                        <Part key={j} $w={w} $c={c}>
                          {Array.isArray(text) ? text.map(([t, col], q) => <Ink key={q} $c={col}>{t}</Ink>) : text}
                        </Part>
                      ))}
                    </Line>
                  ))}
                </Frame>
              </Page>
            </Desk>
          </Body>
        </WorkLeft>
        <VScroll>
          <ScrollButton aria-label="up"><Arrow dir="up" /></ScrollButton>
          <Gap $n={145} />
          <VThumb><svg width="7" height="8"><path d="M0 .500h7M0 2.500h7M0 4.500h7M0 6.500h7" stroke="#eef4fe" /></svg></VThumb>
          <Gap $n={620} />
          <ScrollButton aria-label="down"><Arrow /></ScrollButton>
          <NavButton aria-label="previous page"><svg width="8" height="9"><path d="M0 4h8L4 0zM0 9h8L4 5z" /></svg></NavButton>
          <NavButton aria-label="navigation"><svg width="9" height="9"><circle cx="4.500" cy="4.500" r="3.500" fill="#5d86a8" stroke="#1d3c58" /></svg></NavButton>
          <NavButton aria-label="next page"><svg width="8" height="9"><path d="M0 0h8L4 4zM0 5h8L4 9z" /></svg></NavButton>
        </VScroll>
      </Work>
      <HScroll>
        <ScrollButton aria-label="left"><Arrow dir="left" /></ScrollButton>
        <HThumb><svg width="8" height="8"><path d="M.500 0v7M2.500 0v7M4.500 0v7M6.500 0v7" stroke="#8fabe8" /></svg></HThumb>
        <ScrollButton aria-label="right"><Arrow dir="right" /></ScrollButton>
      </HScroll>

      <Status>
        <Cell $first $w={359}>頁2/6</Cell>
        <Cell $w={347}>預設</Cell>
        <Cell $w={382} $center>中文 (繁體)</Cell>
        <Cell $w={37}>插入</Cell>
        <Cell $w={37}>標準</Cell>
        <Cell $w={16} />
        <Cell $w={29} />
        <Cell />
        <Cell $w={75}>
          <svg width="60" height="14" fill="#f4f8fc" stroke="#6a8098">
            <path d="M1.500 3.500l3-3h5v12h-8z" />
            <path d="M16.500 3.500l3-3h5v12h-8zM26.500 3.500l3-3h5v12h-8z" fill="#b8dcf8" stroke="#28507c" />
            <path d="M41.500 3.500l3-3h5v12h-8zM49.500.500h5l3 3v9h-8z" />
          </svg>
        </Cell>
        <Cell $w={143}>
          <IconButton aria-label="zoom out"><Icon n="minus" /></IconButton>
          <Zoom type="range" aria-label="zoom" min="0" max="100" defaultValue="62" />
          <IconButton aria-label="zoom in"><Icon n="plus" /></IconButton>
        </Cell>
        <Cell $w={40}>215%</Cell>
      </Status>

      <TaskBar>
        <Start><Icon n="flag" /><span>開始</span></Start>
        {TASKS.map(([ic, t, on]) => <Task key={t} $on={on}><Icon n={ic} s={16} />{t}</Task>)}
        <Spacer />
        <Tray>
          <Icon n="keyboard" /><Icon n="ask" s={15} />
          <svg width="10" height="19" fill="none" stroke="#fff"><path d="M.500 3.500h5v4h-5zM2.500 3V.500h5v4H6" /><path d="M1 14h6l-3 3z" fill="#fff" stroke="none" /></svg>
        </Tray>
        <Clock>
          <Round aria-label="show icons"><Icon n="chev" /></Round>
          <span>下午 06:37</span>
        </Clock>
      </TaskBar>
    </Window>
  );
}
